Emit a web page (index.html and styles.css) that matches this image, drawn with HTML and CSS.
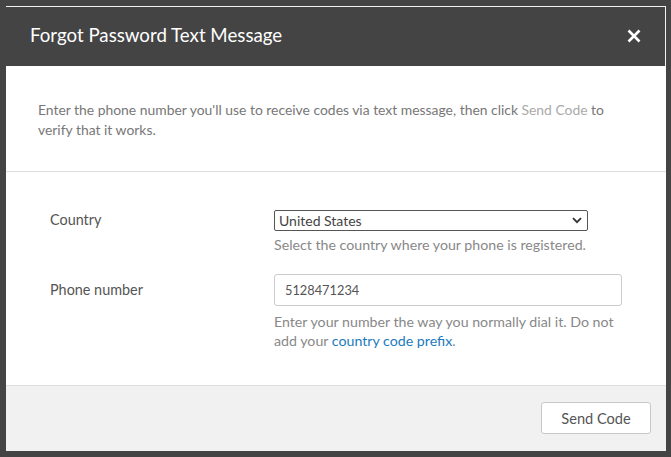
FILE: index.html
```html
<!DOCTYPE html>
<html lang="en">
<head>
	<meta charset="UTF-8">
	<title>Forgot Password Text Message</title>
	<link rel="stylesheet" href="styles.css">
</head>
<body>
<div class="modal">
	<div class="modal-head">
		<h1>Forgot Password Text Message</h1>
		<span class="close">
			<svg width="14" height="14" viewBox="0 0 14 14"><path d="M1.5 1.5L12.5 12.5M12.5 1.5L1.5 12.5" stroke="#fff" stroke-width="2.6"/></svg>
		</span>
	</div>
	<div class="intro">
		<p>Enter the phone number you'll use to receive codes via text message, then click <span class="muted">Send Code</span> to verify that it works.</p>
	</div>
	<div class="form">
		<div class="row">
			<label>Country</label>
			<div class="field">
				<div class="select-wrap">
					<select class="select">
						<option>United States</option>
					</select>
					<svg class="chevron" width="10" height="7" viewBox="0 0 10 7"><path d="M1 1.2L5 5.2L9 1.2" fill="none" stroke="#333" stroke-width="1.8"/></svg>
				</div>
				<p class="help">Select the country where your phone is registered.</p>
			</div>
		</div>
		<div class="row">
			<label>Phone number</label>
			<div class="field">
				<input class="input" type="text" value="5128471234">
				<p class="help">Enter your number the way you normally dial it. Do not add your <a href="#">country code prefix</a>.</p>
			</div>
		</div>
	</div>
	<div class="modal-foot">
		<button class="btn">Send Code</button>
	</div>
</div>
</body>
</html>
```

FILE: styles.css
```css
html, body{
	margin: 0;
	padding: 0;
}
body{
	background: #444;
	width: 671px;
	height: 457px;
	overflow: hidden;
	font-family: Lato, "Open Sans", sans-serif;
	padding: 6px 5px 6px 6px;
	box-sizing: border-box;
}
.modal{
	width: 660px;
	background: #fff;
}
.modal-head{
	display: flex;
	align-items: center;
	justify-content: space-between;
	height: 60px;
	padding: 0 24px 4px 24px;
	background: #444;
	border-top: 1px solid #f2f2f2;
	border-right: 1px solid #f2f2f2;
	box-sizing: border-box;
}
.modal-head h1{
	margin: 0;
	font-size: 18.7px;
	font-weight: normal;
	color: #fff;
}
.close{
	display: flex;
	margin-top: 2px;
}
.intro{
	padding: 34px 32px 31px 32px;
	border-bottom: 1px solid #ddd;
}
.intro p{
	margin: 0;
	font-size: 13.9px;
	line-height: 20px;
	color: #777;
}
.muted{
	color: #aaa;
}
.form{
	padding: 38px 44px 35px 44px;
	border-bottom: 1px solid #ddd;
}
.row{
	display: flex;
	margin-bottom: 20px;
}
.row:last-child{
	margin-bottom: 0;
}
.row label{
	width: 224px;
	font-size: 14.4px;
	color: #555;
	line-height: 20px;
}
.row:last-child label{
	padding-top: 6px;
}
.field{
	flex: 1;
}
.select-wrap{
	position: relative;
	width: 314px;
}
.select{
	display: block;
	width: 100%;
	height: 21px;
	margin: 0;
	padding: 0 0 0 4px;
	-webkit-appearance: none;
	appearance: none;
	border: 1px solid #555;
	border-radius: 2px;
	background: #fff;
	font-family: Lato, "Open Sans", sans-serif;
	font-size: 14px;
	color: #444;
}
.chevron{
	position: absolute;
	right: 6px;
	top: 7px;
}
.input{
	display: block;
	width: 348px;
	height: 32px;
	margin: 0;
	padding: 0 10px;
	box-sizing: border-box;
	border: 1px solid #ccc;
	border-radius: 3px;
	font-family: Lato, "Open Sans", sans-serif;
	font-size: 12.8px;
	color: #555;
}
.help{
	margin: 4px 0 0 0;
	font-size: 14.2px;
	line-height: 19px;
	color: #888;
}
.input + .help{
	margin-top: 6px;
}
.help a{
	color: #1b7bbd;
	text-decoration: none;
}
.modal-foot{
	display: flex;
	justify-content: flex-end;
	height: 65px;
	padding: 16px 15px 0 0;
	box-sizing: border-box;
	background: #f1f1f1;
}
.btn{
	width: 110px;
	height: 32px;
	background: #fff;
	border: 1px solid #c8c8c8;
	border-radius: 3px;
	font-family: Lato, "Open Sans", sans-serif;
	font-size: 14.6px;
	color: #555;
}
```
